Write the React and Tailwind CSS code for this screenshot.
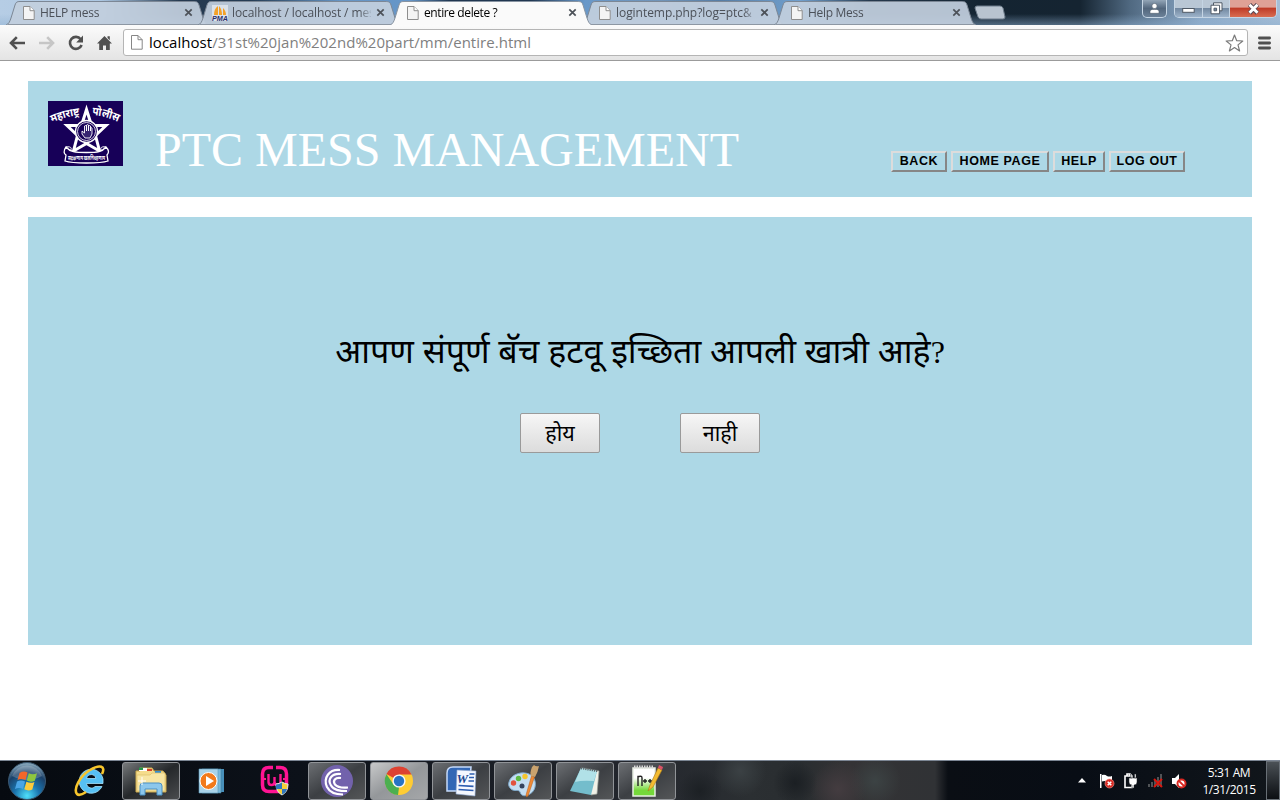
import React from 'react';

const ui = "font-['Open_Sans','Noto_Sans',sans-serif]";

function PageIcon({ className = '' }) {
  return (
    <svg className={className} width="12" height="14" viewBox="0 0 12 14">
      <path d="M.5.5h6.5l4.2 4.2v8.8H.5z" fill="#f4f4f4" stroke="#8e8e8e" />
      <path d="M7 .5v4.2h4.2" fill="#fff" stroke="#8e8e8e" />
    </svg>
  );
}

function PmaIcon() {
  return (
    <svg width="16" height="16" viewBox="0 0 16 16">
      <rect width="16" height="16" fill="#dbe2ea" />
      <path d="M2 10c0-4 1-7 4-9v9zM7 10V1c2 2 3 5 3 9zM11 10V3c2 2 3 4 3 7z" fill="#f4a128" />
      <text x="0" y="15.8" fontSize="6.8" fontWeight="bold" fontStyle="italic" fill="#2b2f6b" fontFamily="Liberation Sans" textLength="16" lengthAdjust="spacingAndGlyphs">PMA</text>
    </svg>
  );
}

function Tab({ title, active, pma, spacing }) {
  return (
    <div className={`relative -mr-[10px] flex h-[25px] w-[202px] shrink-0 items-center ${active ? 'z-10' : ''}`}>
      <svg className="absolute inset-0" width="202" height="25" viewBox="0 0 202 25">
        <path
          d="M0 25C3 24 4 21 5 18L9 5C10 2 11 1.5 14 1.5H187C191 1.5 192 2 193 5L197 18C198 21 199 24 202 25Z"
          fill={active ? '#fafafa' : '#c2cfde'} fillOpacity={active ? 1 : 0.93}
        />
        <path
          d="M0 25C3 24 4 21 5 18L9 5C10 2 11 1.5 14 1.5H187C191 1.5 192 2 193 5L197 18C198 21 199 24 202 25"
          fill="none" stroke={active ? '#8793a1' : '#7c8795'} strokeWidth="1"
        />
        {!active && <path d="M2 24.500H200" stroke="#8d97a3" />}
      </svg>
      <div className={`relative flex w-full items-center pr-[13px] ${pma ? 'pl-[14px]' : 'pl-[17px]'}`}>
        <span className={`flex shrink-0 ${pma ? 'w-[20px]' : 'w-[17px]'}`}>{pma ? <PmaIcon /> : <PageIcon />}</span>
        <span className={`h-[18px] w-[139px] whitespace-nowrap [mask-image:linear-gradient(90deg,#000_127px,transparent_141px)] text-[12px] leading-[18px] ${spacing} ${active ? 'text-black' : 'text-[#4b5058]'} ${ui}`}>{title}</span>
        <svg className="ml-[5px] shrink-0" width="9" height="9" viewBox="0 0 9 9">
          <path d="M1.300 1.300l6.400 6.400M7.700 1.300L1.300 7.700" stroke="#4c5158" strokeWidth="1.700" />
        </svg>
      </div>
    </div>
  );
}

function WindowControls() {
  return (
    <div className="ml-auto flex h-[18px] items-start pr-[3px]">
      <div className="mr-[7px] flex h-[18px] w-[25px] items-center justify-center rounded-b-[5px] border border-t-0 border-[#c5d5e4] bg-gradient-to-b from-[#93a5b7] via-[#53677d] to-[#6b8198]">
        <svg width="11" height="11" viewBox="0 0 11 11">
          <circle cx="5.5" cy="3" r="2.6" fill="#fff" stroke="#56616e" strokeWidth=".6" />
          <path d="M1 10.3V8.5C1 6.8 2.5 6.4 5.5 6.4S10 6.8 10 8.5v1.8z" fill="#fff" stroke="#56616e" strokeWidth=".6" />
        </svg>
      </div>
      <div className="flex h-[18px] w-[103px] overflow-hidden rounded-b-[5px] border border-t-0 border-[#c5d5e4]">
        <div className="flex w-[28px] items-center justify-center border-r border-[#c5d5e4] bg-gradient-to-b from-[#b9c7d5] from-45% via-[#7389a1] via-50% to-[#9db3ca]">
          <svg width="13" height="14" viewBox="0 0 13 14"><rect x=".7" y="6.5" width="11.5" height="3.8" fill="#fff" stroke="#4f5965" /></svg>
        </div>
        <div className="flex w-[27px] items-center justify-center border-r border-[#c5d5e4] bg-gradient-to-b from-[#b9c7d5] from-45% via-[#7389a1] via-50% to-[#9db3ca]">
          <svg width="13" height="13" viewBox="0 0 13 13">
            <path d="M3.5.8h8.5v8H3.5z" fill="#fff" stroke="#4f5965" />
            <path d="M1 3.2h8.6v8.6H1z" fill="#fff" stroke="#4f5965" />
            <path d="M4 6.2h2.6v2.6H4z" fill="#7389a1" stroke="#4f5965" />
          </svg>
        </div>
        <div className="flex flex-1 items-center justify-center bg-gradient-to-b from-[#dfa196] from-40% via-[#bf3c28] via-50% to-[#d96c50]">
          <svg width="13" height="12" viewBox="0 0 13 12">
            <path d="M2.5 1.5l8 8.6M10.5 1.5l-8 8.6" stroke="#5a4a55" strokeWidth="4.6" />
            <path d="M2.5 1.8l8 8M10.5 1.8l-8 8" stroke="#fff" strokeWidth="2.9" />
          </svg>
        </div>
      </div>
    </div>
  );
}

function Toolbar() {
  return (
    <div className="flex h-[36px] items-center border-b border-[#9b9b9b] bg-gradient-to-b from-[#fbfbfb] to-[#e4e4e4]">
      <svg className="ml-[9px]" width="17" height="14" viewBox="0 0 17 14">
        <path d="M2 7h14M7.8 1.2L2 7l5.8 5.8" fill="none" stroke="#505050" strokeWidth="2.6" />
      </svg>
      <svg className="ml-[12px]" width="17" height="14" viewBox="0 0 17 14">
        <path d="M1 7h14M9.2 1.2L15 7l-5.8 5.8" fill="none" stroke="#c6c6c6" strokeWidth="2.6" />
      </svg>
      <svg className="ml-[13px]" width="16" height="16" viewBox="0 0 16 16">
        <path d="M12.7 4.2A6 6 0 1 0 13.6 10" fill="none" stroke="#505050" strokeWidth="2.6" />
        <path d="M15 .6v6.8H8.2z" fill="#505050" />
      </svg>
      <svg className="ml-[13px]" width="15" height="16" viewBox="0 0 15 16">
        <path d="M7.5 1L15 8.6H12.8V15H9v-4.4H6V15H2.2V8.6H0zM10.5 1.3h2.3v4l-2.3-2.3z" fill="#505050" />
      </svg>
      <div className="ml-[11px] flex h-[27px] w-[1125px] items-center rounded-[3px] border border-[#b5b5b5] bg-white pl-[7px] pr-[3px]">
        <svg width="12" height="15" viewBox="0 0 12 15">
          <path d="M.5.5h6.5l4.2 4.2v9.5H.5zM7 .5v4.2h4.2" fill="#fff" stroke="#878787" />
        </svg>
        <span className={`mb-[1px] ml-[6px] whitespace-nowrap text-[15px] leading-[24px] tracking-[0.04px] text-[#808080] ${ui}`}>
          <span className="text-black">localhost</span>/31st%20jan%202nd%20part/mm/entire.html
        </span>
        <svg className="ml-auto" width="19" height="18" viewBox="0 0 19 18">
          <path d="M9.5 1l2.2 5.7 6.1.3-4.8 3.9 1.6 6-5.1-3.4-5.1 3.4 1.6-6L1.200 7l6.100-.3z" fill="#fff" stroke="#7b7b7b" strokeWidth="1.200" strokeLinejoin="round" />
        </svg>
      </div>
      <svg className="ml-[10px]" width="13" height="14" viewBox="0 0 13 14">
        <path d="M1.400 2h10.200M1.400 7h10.200M1.400 12h10.200" stroke="#505050" strokeWidth="2.8" strokeLinecap="round" />
      </svg>
    </div>
  );
}

function PoliceEmblem() {
  const deva = "'Noto Sans Devanagari','Noto Sans',sans-serif";
  return (
    <svg width="75" height="65" viewBox="0 0 75 65">
      <defs>
        <path id="arcLeft" d="M4 21.500Q17 15.500 34 14" />
        <path id="arcRight" d="M44 14Q58 15 72 22" />
      </defs>
      <rect width="75" height="65" fill="#170058" />
      <text fontFamily={deva} fontSize="11" fontWeight="bold" fill="#fff"><textPath href="#arcLeft" textLength="29" lengthAdjust="spacingAndGlyphs">महाराष्ट्र</textPath></text>
      <text fontFamily={deva} fontSize="11.500" fontWeight="bold" fill="#fff"><textPath href="#arcRight" textLength="27" lengthAdjust="spacingAndGlyphs">पोलीस</textPath></text>
      <path d="M38.500 8.500L43.500 24.500H58L47.500 34.500 51.500 50 38.500 42.500 25.500 50 29.500 34.500 19 24.500H33.500z" fill="#170058" stroke="#fff" strokeWidth="3" />
      <circle cx="38.500" cy="30.500" r="11" fill="#170058" stroke="#fff" strokeWidth="1.300" />
      <circle cx="38.500" cy="30.500" r="9" fill="none" stroke="#fff" strokeWidth=".8" />
      <path d="M34 30v3l3 4h5l2-4v-6q-1-1-1.500 0v3-5q-1-1-2 0v5-6q-1-1-2 0v6-5q-1-1-2 0v7z" fill="#352370" stroke="#fff" strokeWidth=".9" />
      <path d="M18 46c4 5 9 5.500 20.500 5.500S54 51 58 46c4 4 2 7 1 8l1 6c-6 2-11 2-21.500 2S23 62 17 60l1-6c-2-1-3-4 0-8z" fill="#170058" stroke="#fff" strokeWidth="1.300" />
      <path d="M18 46c6-1 6 2 4 4M58 46c-6-1-6 2-4 4" fill="none" stroke="#fff" />
      <text x="20" y="58.500" fontFamily={deva} fontSize="5.500" fontWeight="bold" fill="#fff">
        <tspan textLength="37" lengthAdjust="spacingAndGlyphs">सद्रक्षणाय खलनिग्रहणाय</tspan>
      </text>
    </svg>
  );
}

function NavButton({ label, width }) {
  return (
    <button className={`${width} h-[21px] whitespace-nowrap border-2 border-b-[#868686] border-l-[#dcdcdc] border-r-[#868686] border-t-[#dcdcdc] bg-[#add8e6] text-center font-['Liberation_Sans',sans-serif] text-[12.500px] font-bold leading-[17px] tracking-[0.6px] text-black`}>
      {label}
    </button>
  );
}

function AnswerButton({ label }) {
  return (
    <button className="flex h-[40px] w-[80px] items-center justify-center rounded-[2px] border border-[#9a9a9a] bg-gradient-to-b from-[#f6f6f6] to-[#dcdcdc] pt-[7px] font-['Noto_Sans_Devanagari','Noto_Sans',sans-serif] text-[21.500px] leading-[31px] text-black">
      {label}
    </button>
  );
}

function StartOrb() {
  return (
    <svg width="40" height="40" viewBox="0 0 40 40">
      <defs>
        <radialGradient id="orb" cx=".5" cy=".9" r=".85">
          <stop offset="0" stopColor="#4fe0fa" /><stop offset=".4" stopColor="#1a74ae" /><stop offset=".75" stopColor="#1b4068" /><stop offset="1" stopColor="#7f9fb5" />
        </radialGradient>
      </defs>
      <circle cx="20" cy="20" r="18.500" fill="url(#orb)" stroke="#39566e" />
      <path d="M5 15a16 16 0 0 1 30 0Q20 23 5 15z" fill="#fff" opacity=".2" />
      <path d="M12.500 12q4-2.500 8-.5l-2 7.500q-4-2-8 0z" fill="#f2672a" />
      <path d="M21.800 12.200q4 2 8.200 0l-2.200 7.500q-4 2-8-.2z" fill="#8ec63f" />
      <path d="M10 20.500q4-2 8 0L16 28q-4-2-8 0z" fill="#4aa5e6" />
      <path d="M19.400 20.800q4 2 8 .2L25.300 28.500q-4 2-8-.2z" fill="#fccb3c" />
    </svg>
  );
}

function IeIcon() {
  return (
    <svg width="34" height="34" viewBox="0 0 34 34">
      <path d="M29 22.500A12 12 0 1 1 30 15V19.500H13.500C14 24 19.500 25.500 22 22.500zM13.500 14.500H22.800C22.500 9.500 14.500 9 13.500 14.500z" fill="#56c0f4" stroke="#a5e2fc" strokeWidth=".8" />
      <path d="M29 10C33 2 27 0 17 6 7 12 0 25 4 30c2 2 6 0 9-2" fill="none" stroke="#f7c52c" strokeWidth="2.600" />
    </svg>
  );
}

function ExplorerIcon() {
  return (
    <svg width="34" height="32" viewBox="0 0 34 32">
      <path d="M2 6h4V3h12l2 3h9l3 4v17H2z" fill="#f5dc8c" stroke="#c9a84e" />
      <path d="M5 3h8v3H5z" fill="#fff" /><path d="M5 2.500h4V5H5z" fill="#24964a" /><path d="M13 4h5v2h-5z" fill="#d8432c" /><path d="M21 6h6v2h-6z" fill="#328dd0" />
      <path d="M3 10h13l2-2h13v18H3z" fill="#f7e5a3" stroke="#dcc06b" strokeWidth=".7" />
      <path d="M6 30V21q0-3 3-3h16q3 0 3 3v9h-5v-6H11v6z" fill="#8cc7ec" stroke="#4b90c4" />
      <path d="M8 12v8M4 16h8" stroke="#fff" />
    </svg>
  );
}

function MediaIcon() {
  return (
    <svg width="28" height="28" viewBox="0 0 28 28">
      <path d="M7 2h19v23H7z" fill="#478fba" /><path d="M4 2h19v24H4z" fill="#78b8db" stroke="#457f9f" strokeWidth=".6" /><path d="M1 2h19v24H1z" fill="#a9d3e9" stroke="#5d98b8" strokeWidth=".6" />
      <circle cx="10.500" cy="14" r="8.500" fill="#f27a1c" stroke="#fff" /><path d="M8 9l8 5-8 5z" fill="#fff" />
    </svg>
  );
}

function WampIcon() {
  return (
    <svg width="30" height="32" viewBox="0 0 30 32">
      <path d="M13 2.500H9Q2.500 2.500 2.500 9v11q0 6.500 6.500 6.500h11q6.500 0 6.500-6.500V9q0-6.500-6.500-6.500H16" fill="none" stroke="#ff1493" strokeWidth="3.500" />
      <path d="M8.500 9v8q0 3 3 3t3-3v-5 5q0 3 3 3t3-3V9" fill="none" stroke="#ff1493" strokeWidth="2.400" />
      <path d="M3 14h3M23 14h3" stroke="#ff1493" strokeWidth="2" />
      <path d="M22 17q3 2 6 2 0 8-6 11-6-3-6-11 3 0 6-2z" fill="#f7cf38" stroke="#dce8ef" />
      <path d="M22 17.500V24h-6q0-2 0-4.500 3 0 6-2zM22 24h5q-1 4-5 5.500z" fill="#2f76bd" />
    </svg>
  );
}

function BitIcon() {
  return (
    <svg width="34" height="34" viewBox="0 0 34 34">
      <circle cx="17" cy="17" r="16" fill="#7262ac" />
      <path d="M20 6C9 5 3 14 7 23c3 6 9 7.500 16 7.500" fill="none" stroke="#fff" strokeWidth="2.200" />
      <path d="M21 10C12 9 7 15 11 21.500c3 5 9 5.500 16 5.500" fill="none" stroke="#fff" strokeWidth="2.200" />
      <path d="M21 14c-6-1-8.500 3-6 6.500 3 3.500 8 3.500 13 3" fill="none" stroke="#fff" strokeWidth="2.200" />
    </svg>
  );
}

function ChromeIcon() {
  return (
    <svg width="30" height="30" viewBox="0 0 30 30">
      <circle cx="15" cy="15" r="14" fill="#fc3" />
      <path d="M15 15L2.500 8A14 14 0 0 1 27.500 8.500H15z" fill="#dd4232" />
      <path d="M2.500 8.200L9.500 18.500 15 21.500 14 29A14 14 0 0 1 2.500 8.200z" fill="#4caf50" />
      <circle cx="15" cy="15" r="6.600" fill="#f7f7f7" /><circle cx="15" cy="15" r="5.200" fill="#2873c4" />
    </svg>
  );
}

function WordIcon() {
  return (
    <svg width="32" height="32" viewBox="0 0 32 32">
      <path d="M2 26V8q0-6 6-6h18l-2 24z" fill="#3267b5" stroke="#c5dafa" strokeWidth="1.500" />
      <path d="M12 5l19 1-1 25-19-2z" fill="#f5f8ff" stroke="#8aa4cf" strokeWidth=".6" />
      <text x="11.500" y="18" fontSize="13" fontWeight="bold" fontStyle="italic" fontFamily="Liberation Serif" fill="#1d4791">W</text>
      <path d="M24.500 9h5M24 12.500h5M23.500 16h5.500M13.500 20.500l15 .8M13.500 24.500l15 1" stroke="#2c5db0" strokeWidth="1.700" />
    </svg>
  );
}

function PaintIcon() {
  return (
    <svg width="34" height="34" viewBox="0 0 34 34">
      <path d="M3 18C5 10 17 6 25 11c6 4 6 15-1 19-5 3-9 2-10-2-1-3-6 0-9-3-2-2-3-4-2-7z" fill="#c4def2" stroke="#7ea9cb" />
      <circle cx="7.500" cy="19" r="2.700" fill="#e2523d" /><circle cx="12.500" cy="14.500" r="2.700" fill="#5dba43" /><circle cx="19" cy="12.500" r="2.700" fill="#f5c52d" /><circle cx="16" cy="22" r="2.500" fill="#35445e" />
      <path d="M20 31L25.500 12l3 1L22 32q-2 2-2-1z" fill="#ef8a36" stroke="#b35c19" strokeWidth=".5" />
      <path d="M25 12q-1-4 0-6 0-3 3-5 2 2 5 1-1 6-4 11z" fill="#caa36e" />
    </svg>
  );
}

function NotepadIcon() {
  return (
    <svg width="32" height="32" viewBox="0 0 32 32">
      <path d="M13 3l17 3-2 23-6 1z" fill="#f1f1e7" stroke="#989e96" strokeWidth=".7" />
      <path d="M12 3l16 3-6 24L1 26z" fill="#74bdcc" /><path d="M12 3l16 3-3 10Q13 15 6 17z" fill="#b1e1e7" />
      <path d="M12 3l17 3" stroke="#5d6468" strokeWidth="2.500" strokeDasharray="1.200 1" />
    </svg>
  );
}

function NppIcon() {
  return (
    <svg width="32" height="34" viewBox="0 0 32 34">
      <defs><linearGradient id="npp" x2="0" y2="1"><stop offset=".35" stopColor="#fff" /><stop offset=".8" stopColor="#75d83a" /></linearGradient></defs>
      <path d="M2 4h22v28H2z" fill="url(#npp)" stroke="#e8eee4" strokeWidth="1.500" />
      <path d="M3 3h20" stroke="#d8d8d8" strokeWidth="3" strokeDasharray="1.500 1" />
      <path d="M7 22V12.500h1q3-1 3 1.500v8M12 17h4M14 15v4M17 17h4M19 15v4" fill="none" stroke="#222" strokeWidth="1.400" />
      <path d="M17 27l2-6L27 4l4 2-9 17z" fill="#f3bb31" stroke="#a97717" strokeWidth=".6" /><path d="M27 4l1-3 4 2-1 3z" fill="#db5268" />
    </svg>
  );
}

function TaskButton({ children, tone = 'from-[#6c6f73] via-[#3c3f43] to-[#545658]' }) {
  return (
    <div className={`flex h-[38px] w-[58px] items-center justify-center rounded-[3px] border border-[#919498] bg-gradient-to-br ${tone}`}>
      {children}
    </div>
  );
}

function Tray() {
  return (
    <div className="ml-auto flex h-full items-center">
      <svg width="8" height="5" viewBox="0 0 8 5"><path d="M4 0l4 4.500H0z" fill="#fff" /></svg>
      <svg className="ml-[13px]" width="16" height="16" viewBox="0 0 16 16">
        <path d="M1 1h1.500v14H1zM3 2q3-1 5 1 2 1 5 0v6q-4 1-6-.5-1-.8-4 0z" fill="#fff" />
        <circle cx="10.500" cy="10.500" r="4.500" fill="#d82b24" stroke="#f19b94" strokeWidth=".6" /><path d="M8.700 8.700l3.600 3.600M12.300 8.700l-3.600 3.600" stroke="#fff" strokeWidth="1.500" />
      </svg>
      <svg className="ml-[8px]" width="15" height="16" viewBox="0 0 15 16">
        <path d="M2 3h7v11.500H2zM4 1h3v2H4z" fill="none" stroke="#fff" strokeWidth="1.600" />
        <path d="M6 5h8v4q0 3-3 3v3H9v-3q-3 0-3-3zM7.500 1h1.500v4H7.500zM11.500 1H13v4h-1.500z" fill="#fff" stroke="#20242a" strokeWidth=".5" />
      </svg>
      <svg className="ml-[9px]" width="17" height="16" viewBox="0 0 17 16">
        <path d="M1 11h2v3H1zM4 9h2v5H4zM7 7h2v7H7zM10 4h2v10h-2zM13 1h2v13h-2z" fill="#505356" />
        <path d="M7 6l8 8M15 6l-8 8" stroke="#d9170e" strokeWidth="2" />
      </svg>
      <svg className="ml-[7px]" width="16" height="16" viewBox="0 0 16 16">
        <path d="M1 5h3l4-4v14l-4-4H1z" fill="#fff" />
        <circle cx="10.500" cy="10.500" r="4" fill="#fff" stroke="#d92720" strokeWidth="2" /><path d="M8 8l5 5" stroke="#d92720" strokeWidth="1.800" />
      </svg>
      <div className={`ml-[9px] flex w-[66px] flex-col items-center whitespace-nowrap text-[12px] leading-[17px] tracking-[-0.4px] text-white ${ui}`}>
        <span>5:31 AM</span>
        <span>1/31/2015</span>
      </div>
      <div className="ml-[4px] h-full w-[14px] border border-[#686f76] bg-gradient-to-b from-[#4b5156] to-[#0c0f13]" />
    </div>
  );
}

export default function App() {
  return (
    <div className="flex h-[800px] w-[1280px] flex-col overflow-hidden bg-white">
      <div className="flex h-[25px] shrink-0 bg-[linear-gradient(180deg,transparent_14px,#8fb0d080_25px),linear-gradient(90deg,#b6cde5_0,#adc8e3_100px,#25394f_180px,#253c54_250px,#6695c4_340px,#6696c8_410px,#203650_450px,#203650_530px,#6998c9_585px,#7194b8_660px,#567da5_720px,#71a0ce_800px,#26394d_870px,#142432_980px,#152431_1080px,#506981_1130px,#8ca9c7_1200px,#a6bed6_1280px)] pl-[6px]">
        <Tab title="HELP mess" spacing="tracking-[-0.25px]" />
        <Tab title="localhost / localhost / mes" pma spacing="tracking-[-0.1px]" />
        <Tab title="entire delete ?" active spacing="tracking-[-0.4px]" />
        <Tab title="logintemp.php?log=ptc&" spacing="tracking-[-0.05px]" />
        <Tab title="Help Mess" spacing="tracking-[-0.3px]" />
        <svg className="ml-[8px] mt-[5px]" width="32" height="16" viewBox="0 0 32 16">
          <path d="M3 1h23q2 0 3 2l2 9q0 2-2 2H7q-2 0-3-2L1 3q0-2 2-2z" fill="#b9c4d0" stroke="#6d7b8a" />
        </svg>
        <WindowControls />
      </div>
      <Toolbar />

      <main className="flex flex-1 flex-col gap-5 px-7 pt-5">
        <header className="flex h-[116px] shrink-0 items-start bg-[#add8e6] pl-5 pt-5">
          <PoliceEmblem />
          <h1 className="ml-[32px] mt-[21px] w-[600px] whitespace-nowrap font-['Liberation_Serif',serif] text-[48px] leading-[55px] text-white">PTC MESS MANAGEMENT</h1>
          <nav className="ml-[136px] mt-[50px] flex gap-1">
            <NavButton label="BACK" width="w-[56px]" />
            <NavButton label="HOME PAGE" width="w-[98px]" />
            <NavButton label="HELP" width="w-[52px]" />
            <NavButton label="LOG OUT" width="w-[76px]" />
          </nav>
        </header>
        <section className="flex h-[428px] shrink-0 flex-col items-center bg-[#add8e6] pt-[108px]">
          <p className="flex h-[56px] items-center whitespace-nowrap font-['Noto_Sans_Devanagari','Noto_Sans',sans-serif] text-[34px] leading-[56px] text-black">
            <span>आपण संपूर्ण बॅच हटवू इच्छिता आपली खात्री आहे<span className="font-['Liberation_Serif',serif] text-[32px]">?</span></span>
          </p>
          <div className="mt-[32px] flex gap-20">
            <AnswerButton label="होय" />
            <AnswerButton label="नाही" />
          </div>
        </section>
      </main>

      <footer className="flex h-[40px] shrink-0 items-center border-t border-[#7c8694] bg-[radial-gradient(circle_at_700px_30px,#1c2024_0,transparent_22px),radial-gradient(circle_at_740px_10px,#3b4144_0,transparent_26px),radial-gradient(circle_at_795px_22px,#1b1f23_0,transparent_22px),radial-gradient(circle_at_838px_28px,#443c40_0,transparent_28px),radial-gradient(circle_at_875px_20px,#3c4344_0,transparent_26px),linear-gradient(90deg,#060a10_0,#0c1119_300px,#24272e_640px,#2b2f32_750px,#292d30_800px,#343335_850px,#303235_935px,#0a0e14_948px,#080d15_1080px,#11161b_1280px)]">
        <div className="ml-[7px] flex w-[40px]"><StartOrb /></div>
        <div className="ml-[26px] flex w-[34px]"><IeIcon /></div>
        <div className="ml-[15px]"><TaskButton tone="from-[#777a7c] via-[#25282b] to-[#4a4c4e]"><ExplorerIcon /></TaskButton></div>
        <div className="ml-[18px] flex w-[28px]"><MediaIcon /></div>
        <div className="ml-[34px] flex w-[30px]"><WampIcon /></div>
        <div className="ml-[18px] flex gap-1">
          <TaskButton><BitIcon /></TaskButton>
          <TaskButton tone="from-[#c8c9ca] via-[#94979a] to-[#a5a7a9]"><ChromeIcon /></TaskButton>
          <TaskButton><WordIcon /></TaskButton>
          <TaskButton><PaintIcon /></TaskButton>
          <TaskButton><NotepadIcon /></TaskButton>
          <TaskButton><NppIcon /></TaskButton>
        </div>
        <Tray />
      </footer>
    </div>
  );
}
